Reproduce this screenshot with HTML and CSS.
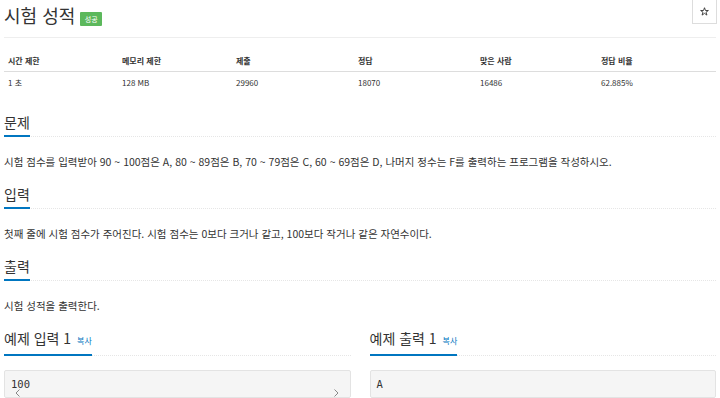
FILE: index.html
```html
<!DOCTYPE html>
<html lang="ko">
<head>
<meta charset="utf-8">
<link rel="stylesheet" href="styles.css">
</head>
<body>
<div class="page">
  <div class="title-row">
    <div class="title-left">
      <h1 class="title">시험 성적</h1>
      <span class="badge">성공</span>
    </div>
    <button class="star-btn"><svg class="star" viewBox="0 0 10 10" width="9" height="9"><path d="M5 0.8 L6.1 3.9 L9.3 3.9 L6.7 5.8 L7.7 9 L5 7.1 L2.3 9 L3.3 5.8 L0.7 3.9 L3.9 3.9 Z" fill="none" stroke="#333" stroke-width="1"/></svg></button>
  </div>

  <div class="info">
    <div class="info-row head">
      <div class="cell">시간 제한</div>
      <div class="cell">메모리 제한</div>
      <div class="cell">제출</div>
      <div class="cell">정답</div>
      <div class="cell">맞은 사람</div>
      <div class="cell">정답 비율</div>
    </div>
    <div class="info-row">
      <div class="cell">1 초</div>
      <div class="cell">128 MB</div>
      <div class="cell">29960</div>
      <div class="cell">18070</div>
      <div class="cell">16486</div>
      <div class="cell">62.885%</div>
    </div>
  </div>

  <section class="sec first">
    <div class="sh"><span class="st">문제</span></div>
    <p class="txt">시험 점수를 입력받아 90 ~ 100점은 A, 80 ~ 89점은 B, 70 ~ 79점은 C, 60 ~ 69점은 D, 나머지 정수는 F를 출력하는 프로그램을 작성하시오.</p>
  </section>

  <section class="sec">
    <div class="sh"><span class="st">입력</span></div>
    <p class="txt">첫째 줄에 시험 점수가 주어진다. 시험 점수는 0보다 크거나 같고, 100보다 작거나 같은 자연수이다.</p>
  </section>

  <section class="sec">
    <div class="sh"><span class="st">출력</span></div>
    <p class="txt">시험 성적을 출력한다.</p>
  </section>

  <div class="samples">
    <div class="sample">
      <div class="sh"><span class="st">예제 입력 1 <a class="copy">복사</a></span></div>
      <div class="pre">100<svg class="arr left" viewBox="0 0 6 8" width="6" height="8"><path d="M4.5 0.5 L1 4 L4.5 7.5" fill="none" stroke="#888" stroke-width="1"/></svg><svg class="arr right" viewBox="0 0 6 8" width="6" height="8"><path d="M1.5 0.5 L5 4 L1.5 7.5" fill="none" stroke="#888" stroke-width="1"/></svg></div>
    </div>
    <div class="sample">
      <div class="sh"><span class="st">예제 출력 1 <a class="copy">복사</a></span></div>
      <div class="pre">A</div>
    </div>
  </div>
</div>
</body>
</html>
```

FILE: styles.css
```css
html, body {
  margin: 0;
  padding: 0;
  background: #fff;
}
body {
  font-family: "Noto Sans CJK KR", "Noto Sans", sans-serif;
  color: #333;
}
.page {
  padding: 0 4px;
}
.title-row {
  display: flex;
  justify-content: space-between;
  align-items: flex-start;
  border-bottom: 1px solid #eee;
  padding-bottom: 7px;
}
.title-left {
  display: flex;
  align-items: center;
}
.title {
  margin: 0;
  font-size: 18px;
  font-weight: normal;
  line-height: 30px;
  color: #333;
}
.badge {
  margin-left: 5px;
  margin-top: 8px;
  width: 22px;
  height: 14px;
  background: #5cb85c;
  color: #fff;
  font-size: 7px;
  line-height: 14px;
  text-align: center;
  border-radius: 1px;
}
.star-btn {
  display: flex;
  align-items: center;
  justify-content: center;
  width: 25px;
  height: 25px;
  margin-right: -1px;
  margin-top: -1px;
  border: 1px solid #ddd;
  background: #fff;
  padding: 0;
}
.star {
  display: block;
}
.info {
  margin-top: 12px;
  font-size: 8px;
}
.info-row {
  display: grid;
  grid-template-columns: 114px 114px 122px 122px 121px 1fr;
  line-height: 22px;
}
.info-row.head {
  font-weight: bold;
  line-height: 21px;
  border-bottom: 1px solid #ddd;
}
.cell {
  padding-left: 4px;
}
.sec {
  margin-top: 13px;
}
.sec.first {
  margin-top: 18px;
}
.sh {
  display: flex;
  border-bottom: 1px dotted #e6e6e6;
}
.st {
  font-size: 14px;
  line-height: 20px;
  padding-bottom: 3px;
  border-bottom: 2px solid #0076c0;
  margin-bottom: -1px;
  color: #333;
}
.copy {
  font-size: 8px;
  color: #0076c0;
  margin-left: 2px;
}
.txt {
  margin: 16px 0 0;
  font-size: 10.5px;
  line-height: 18px;
}
.samples {
  display: grid;
  grid-template-columns: 1fr 1fr;
  column-gap: 19px;
  margin-top: 13px;
}
.pre {
  position: relative;
  margin-top: 14px;
  height: 26px;
  padding: 0 6px;
  background: #f5f5f5;
  border: 1px solid #e3e3e3;
  border-radius: 2px;
  font-family: "DejaVu Sans Mono", monospace;
  font-size: 10.5px;
  line-height: 26px;
  color: #333;
}
.arr {
  position: absolute;
  top: 18px;
}
.arr.left { left: 10px; }
.arr.right { right: 11px; }
```
